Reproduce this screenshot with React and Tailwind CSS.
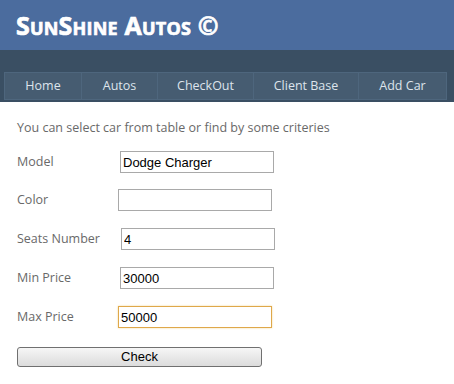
import React from "react";

const navItems = [
    { label: "Home", width: "w-[77px]" },
    { label: "Autos", width: "w-[76px]" },
    { label: "CheckOut", width: "w-[96px]" },
    { label: "Client Base", width: "w-[105px]" },
    { label: "Add Car", width: "w-[87px]" },
];

const fields = [
    { label: "Model", value: "Dodge Charger", labelWidth: "w-[103px]", mt: "mt-[0px]" },
    { label: "Color", value: "", labelWidth: "w-[101px]", mt: "mt-[16px]" },
    { label: "Seats Number", value: "4", labelWidth: "w-[104px]", mt: "mt-[17px]" },
    { label: "Min Price", value: "30000", labelWidth: "w-[103px]", mt: "mt-[17px]" },
    { label: "Max Price", value: "50000", labelWidth: "w-[101px]", mt: "mt-[17px]", focused: true },
];

const App = () => {
    return (
        <div className="w-[454px] h-[384px] bg-white font-['Open_Sans',sans-serif] overflow-hidden">
            {/* header */}
            <div className="h-[50px] bg-[#4b6c9e] pl-[16px] pt-[8px]">
                <h1 className="text-[25px] leading-[34px] font-bold text-white [font-variant:small-caps] tracking-[0.2px] [-webkit-text-stroke:0.7px_white]">
                    SunShine Autos ©
                </h1>
            </div>

            {/* menu */}
            <div className="h-[52px] bg-[#3a4f63] pl-[4px] pt-[22px]">
                <div className="flex w-max h-[28px] border border-[#4e667d]">
                    {navItems.map((item, i) => (
                        <div
                            key={item.label}
                            className={`${item.width} flex items-center justify-center bg-[#465c71] text-[#dde4ec] text-[12.5px] ${i < navItems.length - 1 ? "border-r border-[#4e667d]" : ""}`}
                        >
                            {item.label}
                        </div>
                    ))}
                </div>
            </div>

            {/* form */}
            <div className="pl-[17px] pt-[17px] text-[#696969] text-[12.5px]">
                <p className="leading-[17px]">You can select car from table or find by some criteries</p>

                <div className="mt-[15px]">
                    {fields.map((f) => (
                        <div key={f.label} className={`flex items-center ${f.mt}`}>
                            <span className={`${f.labelWidth} leading-[22px]`}>{f.label}</span>
                            <input
                                type="text"
                                defaultValue={f.value}
                                className={`w-[154px] h-[22px] px-[2px] bg-white text-black text-[13px] font-['Liberation_Sans',sans-serif] outline-none border ${
                                    f.focused ? "border-[#dfa84a] shadow-[0_0_2px_#f3d9a0]" : "border-[#a9a9a9]"
                                }`}
                            />
                        </div>
                    ))}
                </div>

                <button className="mt-[19px] w-[245px] h-[20px] rounded-[3px] border border-[#707070] bg-gradient-to-b from-[#f6f6f6] to-[#dcdcdc] text-black text-[13px] leading-[18px] font-['Liberation_Sans',sans-serif]">
                    Check
                </button>
            </div>
        </div>
    );
};

export default App;
